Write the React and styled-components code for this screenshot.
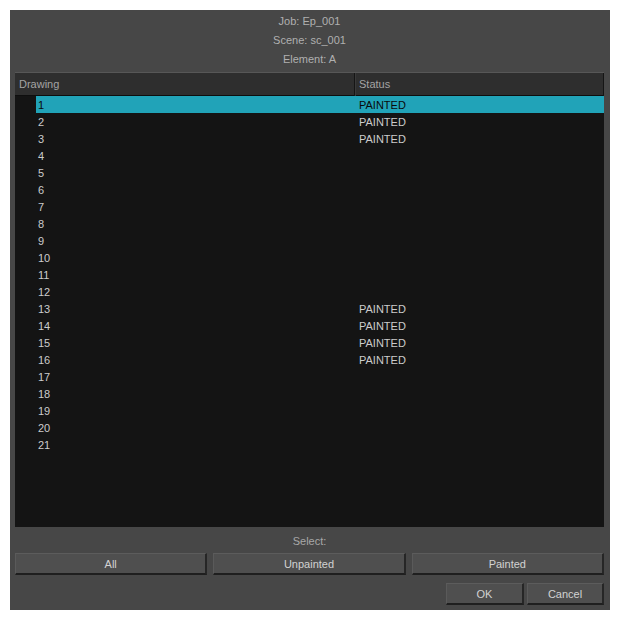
import React, { useState } from "react";
import styled, { createGlobalStyle } from "styled-components";

const GlobalStyle = createGlobalStyle`
  body {
    margin: 0;
    background: #ffffff;
    font-family: "Liberation Sans", Arial, sans-serif;
    font-size: 11px;
  }
`;

const Dialog = styled.div`
  margin: 10px;
  width: 600px;
  height: 600px;
  box-sizing: border-box;
  background: #474747;
  padding: 2px 6px 5px 5px;
  display: flex;
  flex-direction: column;
`;

const InfoLine = styled.div`
  height: 19px;
  line-height: 19px;
  text-align: center;
  color: #b0b0b0;
`;

const Table = styled.div`
  flex-shrink: 0;
  margin-top: 3px;
  height: 455px;
  box-sizing: border-box;
  background: #141414;
  border-top: 1px solid #575757;
  display: flex;
  flex-direction: column;
  overflow: hidden;
`;

const HeaderRow = styled.div`
  display: grid;
  grid-template-columns: 340px 1fr;
  height: 22px;
  flex-shrink: 0;
  background: #2e2e2e;
  border-bottom: 1px solid #0e0e0e;
`;

const HeaderCell = styled.div`
  line-height: 23px;
  padding-left: 4px;
  color: #a4a4a4;
  border-right: 1px solid #151515;
  box-shadow: inset 1px 0 0 ${(p) => (p.first ? "transparent" : "#3a3a3a")};
`;

const Row = styled.div`
  display: grid;
  grid-template-columns: 21px 319px 1fr;
  height: 17px;
  flex-shrink: 0;
`;

const Indent = styled.div``;

const Cell = styled.div`
  height: 17px;
  line-height: 19px;
  padding-left: ${(p) => p.pad}px;
  background: ${(p) => (p.selected ? "#21a3b8" : "transparent")};
  color: ${(p) => (p.selected ? "#0a0a0a" : "#cccccc")};
  font-size: 11px;
`;

const SelectLabel = styled.div`
  margin-top: 4px;
  height: 20px;
  line-height: 20px;
  text-align: center;
  color: #a8a8a8;
`;

const ButtonGrid = styled.div`
  margin-top: 2px;
  display: grid;
  grid-template-columns: repeat(3, 1fr);
  gap: 6px;
`;

const Button = styled.button`
  height: 22px;
  box-sizing: border-box;
  width: ${(p) => (p.w ? `${p.w}px` : "auto")};
  background: #4f4f4f;
  color: #d2d2d2;
  font-family: "Liberation Sans", Arial, sans-serif;
  font-size: 11px;
  border: 1px solid #2a2a2a;
  border-top-color: #5c5c5c;
  border-left-color: #5a5a5a;
  border-bottom: 2px solid #1f1f1f;
  border-right: 2px solid #262626;
  padding: 1px 0 0;
  cursor: pointer;
`;

const Footer = styled.div`
  margin-top: 8px;
  display: flex;
  justify-content: flex-end;
  gap: 3px;
`;

const painted = [1, 2, 3, 13, 14, 15, 16];
const drawings = Array.from({ length: 21 }, (_, i) => ({
  id: i + 1,
  status: painted.includes(i + 1) ? "PAINTED" : "",
}));

export default function App() {
  const [selected, setSelected] = useState(1);

  return (
    <>
      <GlobalStyle />
      <Dialog>
        <InfoLine>Job: Ep_001</InfoLine>
        <InfoLine>Scene: sc_001</InfoLine>
        <InfoLine>Element: A</InfoLine>
        <Table>
          <HeaderRow>
            <HeaderCell first>Drawing</HeaderCell>
            <HeaderCell>Status</HeaderCell>
          </HeaderRow>
          {drawings.map((d) => (
            <Row key={d.id} onClick={() => setSelected(d.id)}>
              <Indent />
              <Cell pad={2} selected={selected === d.id}>
                {d.id}
              </Cell>
              <Cell pad={4} selected={selected === d.id}>
                {d.status}
              </Cell>
            </Row>
          ))}
        </Table>
        <SelectLabel>Select:</SelectLabel>
        <ButtonGrid>
          <Button>All</Button>
          <Button>Unpainted</Button>
          <Button>Painted</Button>
        </ButtonGrid>
        <Footer>
          <Button w={78}>OK</Button>
          <Button w={77}>Cancel</Button>
        </Footer>
      </Dialog>
    </>
  );
}
